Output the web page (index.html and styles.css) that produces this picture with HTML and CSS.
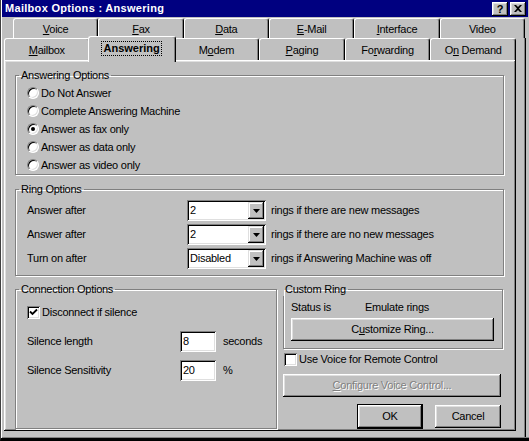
FILE: index.html
```html
<!DOCTYPE html>
<html lang="en">
  <head>
    <meta charset="UTF-8" />
    <title>Mailbox Options : Answering</title>
    <link rel="stylesheet" href="styles.css">
  </head>
  <body>
    <div class="window">
      <!-- Title bar -->
      <div class="titlebar">
        <span class="title">Mailbox Options : Answering</span>
        <div class="caption-buttons">
          <span class="cap-btn help">?</span>
          <span class="cap-btn close">
            <svg width="8" height="7" viewBox="0 0 8 7"><path d="M0 0h2l2 2 2-2h2L5 3.5 8 7H6L4 5 2 7H0l3-3.5z"/></svg>
          </span>
        </div>
      </div>

      <div class="sheet">
        <!-- Tabs -->
        <div class="tab-row back">
          <div class="tab"><span><u>V</u>oice</span></div>
          <div class="tab"><span><u>F</u>ax</span></div>
          <div class="tab"><span><u>D</u>ata</span></div>
          <div class="tab"><span><u>E</u>-Mail</span></div>
          <div class="tab"><span><u>I</u>nterface</span></div>
          <div class="tab"><span>Video</span></div>
        </div>
        <div class="tab-row front">
          <div class="tab"><span><u>M</u>ailbox</span></div>
          <div class="tab selected"><span class="focus">Answering</span></div>
          <div class="tab"><span>M<u>o</u>dem</span></div>
          <div class="tab"><span><u>P</u>aging</span></div>
          <div class="tab"><span>Fo<u>r</u>warding</span></div>
          <div class="tab"><span>O<u>n</u> Demand</span></div>
        </div>

        <div class="page-wrap">
          <div class="page">
            <!-- Answering Options -->
            <fieldset class="group answering">
              <legend>Answering Options</legend>
              <label class="radio-row"><span class="radio"></span>Do Not Answer</label>
              <label class="radio-row"><span class="radio"></span>Complete Answering Machine</label>
              <label class="radio-row"><span class="radio checked"></span>Answer as fax only</label>
              <label class="radio-row"><span class="radio"></span>Answer as data only</label>
              <label class="radio-row"><span class="radio"></span>Answer as video only</label>
            </fieldset>

            <!-- Ring Options -->
            <fieldset class="group ring">
              <legend>Ring Options</legend>
              <div class="ring-grid">
                <span>Answer after</span>
                <div class="combo"><span class="combo-value">2</span><span class="combo-btn"><svg width="7" height="4" viewBox="0 0 7 4"><path d="M0 0h7L3.5 4z"/></svg></span></div>
                <span class="after">rings if there are new messages</span>

                <span>Answer after</span>
                <div class="combo"><span class="combo-value">2</span><span class="combo-btn"><svg width="7" height="4" viewBox="0 0 7 4"><path d="M0 0h7L3.5 4z"/></svg></span></div>
                <span class="after">rings if there are no new messages</span>

                <span>Turn on after</span>
                <div class="combo"><span class="combo-value">Disabled</span><span class="combo-btn"><svg width="7" height="4" viewBox="0 0 7 4"><path d="M0 0h7L3.5 4z"/></svg></span></div>
                <span class="after">rings if Answering Machine was off</span>
              </div>
            </fieldset>

            <div class="lower">
              <!-- Connection Options -->
              <fieldset class="group connection">
                <legend>Connection Options</legend>
                <label class="check-row">
                  <span class="checkbox"><svg width="9" height="9" viewBox="0 0 9 9"><path d="M1 3.5l2.5 2.5L8 1.5" fill="none" stroke="#000" stroke-width="1.8"/></svg></span>
                  <span>Disconnect if silence</span>
                </label>
                <div class="silence-grid">
                  <span>Silence length</span>
                  <span class="field">8</span>
                  <span>seconds</span>
                  <span>Silence Sensitivity</span>
                  <span class="field">20</span>
                  <span>%</span>
                </div>
              </fieldset>

              <div class="right-col">
                <fieldset class="group custom-ring">
                  <legend>Custom Ring</legend>
                  <div class="status-row">
                    <span class="status-label">Status is</span>
                    <span>Emulate rings</span>
                  </div>
                  <button class="btn wide">C<u>u</u>stomize Ring...</button>
                </fieldset>

                <label class="check-row voice">
                  <span class="checkbox"></span>
                  <span>Use Voice for Remote Control</span>
                </label>

                <button class="btn configure" disabled><u>C</u>onfigure Voice Control...</button>

                <div class="dialog-buttons">
                  <button class="btn default">OK</button>
                  <button class="btn">Cancel</button>
                </div>
              </div>
            </div>
          </div>
          <div class="edge"></div>
        </div>
      </div>
    </div>
  </body>
</html>
```

FILE: styles.css
```css
body {
  margin: 0;
  padding: 0;
  background: #c0c0c0;
  font-family: "Liberation Sans", Arial, sans-serif;
  font-size: 11px;
  line-height: 13px;
  letter-spacing: -0.25px;
  color: #000;
}

.window {
  width: 529px;
  height: 441px;
  box-sizing: border-box;
  background: #c0c0c0;
  border-left: 1px solid #404040;
  border-bottom: 3px solid #000;
  box-shadow: inset 1px 0 #fff, inset 0 -1px #808080;
  overflow: hidden;
}

/* Title bar */
.titlebar {
  height: 17px;
  margin: 0 1px 0 1px;
  background: #000080;
  display: flex;
  align-items: center;
  justify-content: space-between;
  padding: 0 2px 0 3px;
}

.title {
  color: #fff;
  font-weight: bold;
  letter-spacing: 0.3px;
}

.caption-buttons {
  display: flex;
  gap: 2px;
}

.cap-btn {
  width: 16px;
  height: 14px;
  box-sizing: border-box;
  background: #c0c0c0;
  box-shadow: inset -1px -1px #000, inset 1px 1px #fff, inset -2px -2px #808080, inset 2px 2px #dfdfdf;
  display: flex;
  align-items: center;
  justify-content: center;
  font-weight: bold;
  font-size: 11px;
  letter-spacing: 0;
}

.cap-btn.help {
  padding-top: 1px;
}

/* Tabs */
.sheet {
  padding: 1px 0 0 3px;
}

.tab-row {
  display: flex;
  position: relative;
}

.tab-row.back {
  margin-left: 9px;
  width: 512px;
  height: 20px;
}

.tab-row.front {
  width: 512px;
  height: 22px;
  align-items: flex-end;
  z-index: 2;
}

.tab {
  flex: 1;
  height: 100%;
  box-sizing: border-box;
  background: #c0c0c0;
  border-top: 1px solid #fff;
  border-left: 1px solid #fff;
  border-right: 1px solid #000;
  border-radius: 3px 3px 0 0;
  box-shadow: inset -1px 0 #808080;
  display: flex;
  justify-content: center;
  align-items: center;
  padding-top: 2px;
}

.tab.selected {
  flex: 0 0 88px;
  margin: 0 -2px -2px;
  height: 26px;
  position: relative;
  z-index: 3;
  font-weight: bold;
  padding-top: 0;
  padding-bottom: 2px;
}

.focus {
  outline: 1px dotted #000;
  padding: 0 1px;
  letter-spacing: 0;
}

/* Page */
.page-wrap {
  display: flex;
}

.page {
  width: 512px;
  height: 371px;
  box-sizing: border-box;
  padding: 9px 12px 0 11px;
  box-shadow: inset -1px -1px #000, inset 1px 1px #fff, inset -2px -2px #808080, inset 2px 2px #dfdfdf;
  display: flex;
  flex-direction: column;
}

.edge {
  width: 9px;
  margin-top: -22px;
  height: 399px;
  border-right: 1px solid #000;
  box-shadow: inset -1px 0 #808080;
}

/* Group boxes */
.group {
  margin: 0;
  padding: 0 0 0 11px;
  border: 1px solid #808080;
  box-shadow: inset 1px 1px #fff, 1px 1px #fff;
  min-width: 0;
}

.group legend {
  padding: 0 2px;
  margin-left: -8px;
  line-height: 13px;
}

.answering {
  padding-top: 2px;
}

.radio-row {
  display: flex;
  align-items: center;
  height: 18px;
  gap: 2px;
}

.radio {
  width: 12px;
  height: 12px;
  box-sizing: border-box;
  border-radius: 50%;
  background: #fff;
  border: 1px solid;
  border-color: #808080 #fff #fff #808080;
  box-shadow: inset 1px 1px #000, inset -1px -1px #dfdfdf;
  display: flex;
  align-items: center;
  justify-content: center;
}

.radio.checked::after {
  content: "";
  width: 4px;
  height: 4px;
  border-radius: 50%;
  background: #000;
}

.ring {
  margin-top: 8px;
  padding-top: 4px;
  padding-bottom: 6px;
}

.ring-grid {
  display: grid;
  grid-template-columns: 160px 79px auto;
  grid-auto-rows: 21px;
  row-gap: 3px;
  align-items: center;
}

.after {
  padding-left: 5px;
}

.combo {
  height: 21px;
  box-sizing: border-box;
  background: #fff;
  box-shadow: inset 1px 1px #808080, inset -1px -1px #fff, inset 2px 2px #000, inset -2px -2px #dfdfdf;
  display: flex;
  align-items: center;
  padding: 2px;
}

.combo-value {
  flex: 1;
  padding-left: 1px;
}

.combo-btn {
  width: 16px;
  height: 17px;
  box-sizing: border-box;
  background: #c0c0c0;
  box-shadow: inset -1px -1px #000, inset 1px 1px #dfdfdf, inset -2px -2px #808080, inset 2px 2px #fff;
  display: flex;
  align-items: center;
  justify-content: center;
}

/* Lower part */
.lower {
  display: flex;
  gap: 6px;
  margin-top: 7px;
}

.connection {
  width: 262px;
  box-sizing: border-box;
  padding-top: 10px;
  padding-bottom: 15px;
}

.check-row {
  display: flex;
  align-items: center;
  gap: 2px;
  height: 13px;
}

.checkbox {
  width: 13px;
  height: 13px;
  box-sizing: border-box;
  background: #fff;
  box-shadow: inset 1px 1px #808080, inset -1px -1px #fff, inset 2px 2px #000, inset -2px -2px #dfdfdf;
  display: flex;
  align-items: center;
  justify-content: center;
}

.silence-grid {
  display: grid;
  grid-template-columns: 153px 36px auto;
  grid-auto-rows: 21px;
  row-gap: 8px;
  align-items: center;
  margin-top: 12px;
}

.field {
  height: 21px;
  box-sizing: border-box;
  background: #fff;
  box-shadow: inset 1px 1px #808080, inset -1px -1px #fff, inset 2px 2px #000, inset -2px -2px #dfdfdf;
  padding: 4px 3px 0;
}

.silence-grid span:nth-child(3n) {
  padding-left: 7px;
}

.right-col {
  width: 221px;
  display: flex;
  flex-direction: column;
}

.custom-ring {
  width: 220px;
  box-sizing: border-box;
  padding: 4px 8px 7px 7px;
}

.status-row {
  display: flex;
  height: 14px;
  align-items: center;
}

.status-label {
  width: 74px;
}

.btn {
  font: inherit;
  letter-spacing: inherit;
  color: #000;
  background: #c0c0c0;
  border: none;
  padding: 0;
  height: 23px;
  box-shadow: inset -1px -1px #000, inset 1px 1px #fff, inset -2px -2px #808080, inset 2px 2px #dfdfdf;
}

.btn.wide {
  width: 203px;
  margin-top: 4px;
}

.voice {
  margin-top: 4px;
  margin-left: 1px;
}

.btn.configure {
  width: 218px;
  margin-top: 8px;
  color: #808080;
  text-shadow: 1px 1px #fff;
}

.dialog-buttons {
  display: flex;
  justify-content: flex-end;
  align-items: center;
  gap: 12px;
  width: 218px;
  margin-top: 7px;
}

.dialog-buttons .btn {
  width: 66px;
}

.btn.default {
  height: 25px;
  box-shadow: inset 0 0 0 1px #000, inset -2px -2px #000, inset 2px 2px #fff, inset -3px -3px #808080, inset 3px 3px #dfdfdf;
}
```
